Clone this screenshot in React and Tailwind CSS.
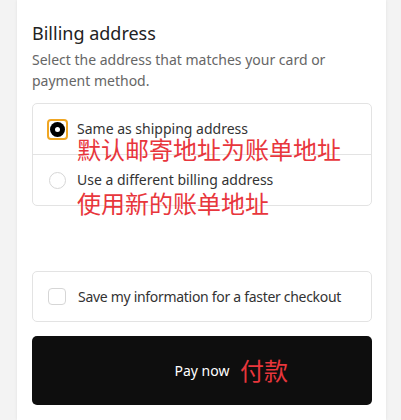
import React from 'react';

const font = { fontFamily: '"Noto Sans", "Noto Sans CJK SC", sans-serif' };
const cjk = { fontFamily: '"Noto Sans CJK SC", sans-serif' };

export default function App() {
  return (
    <div className="min-h-[420px] bg-[#f3f3f3] flex" style={font}>
      <div className="ml-[17px] w-[369px] min-h-[420px] bg-white shadow-[0_0_3px_rgba(0,0,0,0.08)] px-[15px] pt-[20px]">
        <h2 className="text-[18px] leading-[26px] text-[#222]">Billing address</h2>
        <p className="mt-[3px] text-[14px] leading-[21px] text-[#666]">
          Select the address that matches your card or payment method.
        </p>

        <div className="mt-[12px] w-[340px] border border-[#e3e3e3] rounded-[5px]">
          <div className="relative h-[51px] flex items-center pl-[14px] border-b border-[#e3e3e3]">
            <span className="w-[21px] h-[21px] rounded-[4px] border-2 border-[#f0a623] flex items-center justify-center">
              <span className="w-[15px] h-[15px] rounded-full bg-black flex items-center justify-center">
                <span className="w-[5px] h-[5px] rounded-full bg-white" />
              </span>
            </span>
            <span className="ml-[9px] text-[14px] leading-[16px] text-[#333]">Same as shipping address</span>
            <span className="absolute left-[44px] top-[34px] text-[24px] leading-[22px] text-[#e8363c]" style={cjk}>
              默认邮寄地址为账单地址
            </span>
          </div>
          <div className="relative h-[50px] flex items-center pl-[16px]">
            <span className="w-[17px] h-[17px] rounded-full border border-[#d6d6d6]" />
            <span className="ml-[11px] text-[14px] leading-[16px] text-[#333]">Use a different billing address</span>
            <span className="absolute left-[44px] top-[37px] text-[24px] leading-[22px] text-[#e8363c]" style={cjk}>
              使用新的账单地址
            </span>
          </div>
        </div>

        <div className="mt-[65px] w-[340px] h-[51px] border border-[#e3e3e3] rounded-[5px] flex items-center pl-[15px]">
          <span className="w-[18px] h-[17px] rounded-[4px] border border-[#d6d6d6]" />
          <span className="ml-[12px] text-[14px] tracking-[-0.3px] whitespace-nowrap text-[#333]">Save my information for a faster checkout</span>
        </div>

        <button className="relative mt-[14px] w-[340px] h-[69px] bg-[#0e0e0e] rounded-[5px] flex items-center justify-center">
          <span className="text-[14px] text-white">Pay now</span>
          <span className="absolute left-[208px] top-[23px] text-[24px] leading-[22px] text-[#e8363c]" style={cjk}>付款</span>
        </button>
      </div>
    </div>
  );
}
